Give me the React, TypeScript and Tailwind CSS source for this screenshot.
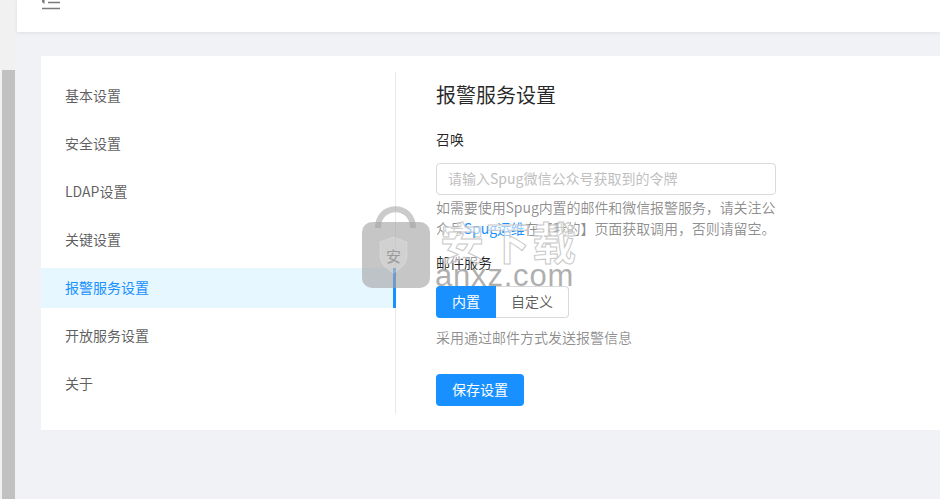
const font = "font-['Noto_Sans_CJK_SC','Noto_Sans',sans-serif]";

const menus = ["基本设置", "安全设置", "LDAP设置", "关键设置", "报警服务设置", "开放服务设置", "关于"];

const Watermark = () => (
  <div className="absolute left-[360px] top-[206px] w-[220px] h-[86px] pointer-events-none">
    <svg width="74" height="84" viewBox="0 0 74 84" className="absolute left-0 top-0">
      <path d="M18 22 C18 -3 53 -3 53 22" fill="none" stroke="#a8a8a8" strokeOpacity="0.6" strokeWidth="6" />
      <rect x="2" y="16" width="68" height="66" rx="10" fill="#a3a3a3" fillOpacity="0.62" />
      <path d="M33.5 31 L47 36 V50 C47 58 40 63 33.5 67 C27 63 20 58 20 50 V36 Z" fill="#ffffff" fillOpacity="0.2" stroke="#ffffff" strokeOpacity="0.2" />
    </svg>
    <span className="absolute left-[26px] top-[38px] text-[15px] leading-[24px] text-[#9a9a9a]">安</span>
    <span className="absolute left-[80px] top-[11px] whitespace-nowrap text-[44px] leading-[48px] font-bold text-white/55 tracking-[2px] [-webkit-text-stroke:1px_#c8c8c8]">
      安下载
    </span>
    <span className="absolute left-[75px] top-[52px] whitespace-nowrap text-[31px] leading-[36px] font-['Liberation_Sans',sans-serif] text-[#8c8c8c]/70 tracking-[0.8px]">
      anxz.com
    </span>
  </div>
);

export default function App() {
  return (
    <div className={`relative flex h-[499px] w-[940px] overflow-hidden bg-[#f0f2f5] ${font}`}>
      <div className="w-[17px] shrink-0 bg-[#f1f1f1] px-[2px] pt-[70px]">
        <div className="h-full w-[13px] bg-[#c1c1c1]" />
      </div>
      <div className="min-w-0 flex-1">
        <div className="relative z-10 h-[32px] overflow-hidden bg-white pl-[25px] shadow-[0_1px_4px_rgba(0,21,41,0.08)]">
          <svg width="18" height="10" viewBox="0 0 18 10" className="block">
            <path d="M6 2.5H18M0 8.5H18" stroke="#7a7a7a" strokeWidth="1.4" fill="none" />
            <path d="M0 0H2.5V4L0 2Z" fill="#7a7a7a" />
          </svg>
        </div>
        <div className="ml-[24px] mt-[24px] flex h-[374px] w-[899px] bg-white py-4">
          <ul className="flex w-[355px] shrink-0 flex-col gap-2 border-r border-[#e8e8e8] py-1">
            {menus.map((item, i) => (
              <li
                key={item}
                className={
                  i === 4
                    ? "mr-[-1px] flex h-10 shrink-0 items-center border-r-[3px] border-[#1890ff] bg-[#e6f7ff] pb-[2px] pl-6 text-sm text-[#1890ff]"
                    : "flex h-10 shrink-0 items-center pb-[2px] pl-6 text-sm text-black/65"
                }
              >
                {item}
              </li>
            ))}
          </ul>
          <div className="pl-10">
            <h2 className="mt-[8px] text-[20px] leading-[30px] text-black/85">报警服务设置</h2>
            <div className="mt-[18px] text-sm leading-[22px] text-black/85">召唤</div>
            <input
              placeholder="请输入Spug微信公众号获取到的令牌"
              className="mt-[13px] block h-[32px] w-[340px] rounded border border-[#d9d9d9] px-[11px] pb-[2px] text-sm outline-none placeholder:text-[#bfbfbf]"
            />
            <p className="mt-[2px] whitespace-nowrap text-sm leading-[21px] tracking-[-0.08px] text-black/45">
              如需要使用Spug内置的邮件和微信报警服务，请关注公
              <br />
              众号<span className="text-[#1890ff]">Spug运维</span>在【我的】页面获取调用，否则请留空。
            </p>
            <div className="mt-[12px] text-sm leading-[22px] text-black/85">邮件服务</div>
            <div className="mt-[13px] flex h-[32px] w-[133px] text-sm">
              <div className="flex w-[60px] items-center justify-center rounded-l bg-[#1890ff] pb-[2px] text-white">内置</div>
              <div className="flex flex-1 items-center justify-center rounded-r border border-l-0 border-[#d9d9d9] pb-[2px] text-black/65">自定义</div>
            </div>
            <p className="mt-[9px] text-sm leading-[21px] text-black/45">采用通过邮件方式发送报警信息</p>
            <button className="mt-[26px] block h-[32px] w-[88px] rounded bg-[#1890ff] pb-[2px] text-sm text-white">保存设置</button>
          </div>
        </div>
      </div>
      <Watermark />
    </div>
  );
}
